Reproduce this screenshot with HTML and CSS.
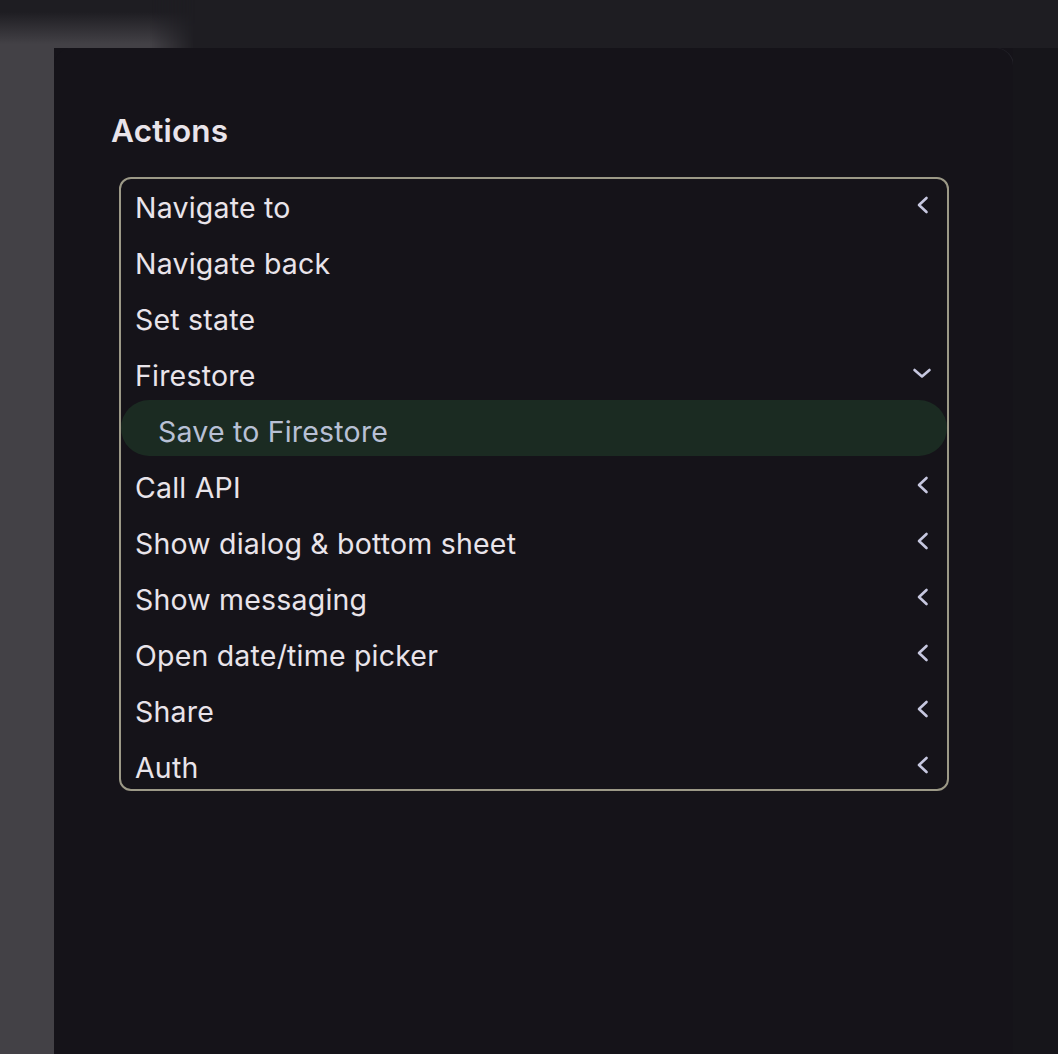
FILE: index.html
```html
<!DOCTYPE html>
<html lang="en">
<head>
  <meta charset="UTF-8" />
  <meta name="viewport" content="width=device-width, initial-scale=1.0"/>
  <title>Actions</title>
  <link rel="stylesheet" href="styles.css">
</head>
<body>
<div class="backdrop-top"><div class="top-fade"></div></div>
<div class="backdrop-side"></div>
<section class="sheet">
  <h2 class="sheet-title">Actions</h2>
  <ul class="action-list">
    <li class="action">Navigate to
      <svg class="chev" viewBox="0 0 24 24"><path d="M16.5 5 L9 12 L16.5 19"/></svg>
    </li>
    <li class="action">Navigate back</li>
    <li class="action">Set state</li>
    <li class="action">Firestore
      <svg class="chev" viewBox="0 0 24 24"><path d="M4.5 9 L12 15.5 L19.5 9"/></svg>
    </li>
    <li class="action sub selected">Save to Firestore</li>
    <li class="action">Call API
      <svg class="chev" viewBox="0 0 24 24"><path d="M16.5 5 L9 12 L16.5 19"/></svg>
    </li>
    <li class="action">Show dialog &amp; bottom sheet
      <svg class="chev" viewBox="0 0 24 24"><path d="M16.5 5 L9 12 L16.5 19"/></svg>
    </li>
    <li class="action">Show messaging
      <svg class="chev" viewBox="0 0 24 24"><path d="M16.5 5 L9 12 L16.5 19"/></svg>
    </li>
    <li class="action">Open date/time picker
      <svg class="chev" viewBox="0 0 24 24"><path d="M16.5 5 L9 12 L16.5 19"/></svg>
    </li>
    <li class="action">Share
      <svg class="chev" viewBox="0 0 24 24"><path d="M16.5 5 L9 12 L16.5 19"/></svg>
    </li>
    <li class="action">Auth
      <svg class="chev" viewBox="0 0 24 24"><path d="M16.5 5 L9 12 L16.5 19"/></svg>
    </li>
  </ul>
</section>
<div class="backdrop-rest"></div>
</body>
</html>
```
FILE: styles.css
```css
:root {
  --bg: #151319;
  --side: #434146;
  --top: #1e1d22;
  --text: #e9e4ea;
  --muted: #b8c0d5;
  --line: #9c9987;
  --pick: #1b2b22;
  --chev: #c6c7df;
}
html, body {
  margin: 0;
  height: 100%;
}
body {
  background: var(--bg);
  font-family: Inter, "Noto Sans", sans-serif;
  color: var(--text);
  display: grid;
  grid-template-columns: 54px 959px 1fr;
  grid-template-rows: 48px 1fr;
  height: 1054px;
  overflow: hidden;
}
.backdrop-top {
  grid-column: 1 / 4;
  grid-row: 1;
  background: var(--top);
}
.top-fade {
  width: 200px;
  height: 100%;
  background: linear-gradient(to bottom, var(--top) 25%, var(--side) 92%);
  -webkit-mask-image: linear-gradient(to right, #000 150px, transparent 195px);
  mask-image: linear-gradient(to right, #000 150px, transparent 195px);
}
.backdrop-side {
  grid-column: 1;
  grid-row: 2;
  background: var(--side);
}
.backdrop-rest {
  grid-column: 3;
  grid-row: 2;
  background: #16151a;
}
.sheet {
  grid-column: 2;
  grid-row: 1 / 3;
  margin-top: 48px;
  background: var(--bg);
  border-radius: 18px 18px 0 0;
  box-shadow: 1px 0 0 #24232a;
  padding: 58px 64px 0 57px;
}
.sheet-title {
  margin: 0 0 21px;
  font-size: 31.5px;
  font-weight: 600;
  line-height: 50px;
  letter-spacing: 0.2px;
}
.action-list {
  list-style: none;
  margin: 0 0 0 8px;
  padding: 0;
  height: 610px;
  overflow: hidden;
  border: 2px solid var(--line);
  border-radius: 12px;
}
.action {
  display: flex;
  align-items: center;
  justify-content: space-between;
  height: 56px;
  padding: 0 13px 0 14px;
  font-size: 28.5px;
  letter-spacing: 0.2px;
}
.action.sub {
  padding-left: 37px;
}
.action.selected {
  background: var(--pick);
  color: var(--muted);
  border-radius: 28px;
  margin: -3px 0 3px;
  padding-top: 6px;
  height: 50px;
}
.chev {
  width: 24px;
  height: 24px;
  fill: none;
  stroke: var(--chev);
  stroke-width: 2.6;
  stroke-linecap: round;
  stroke-linejoin: round;
  margin-top: -4px;
}
```
